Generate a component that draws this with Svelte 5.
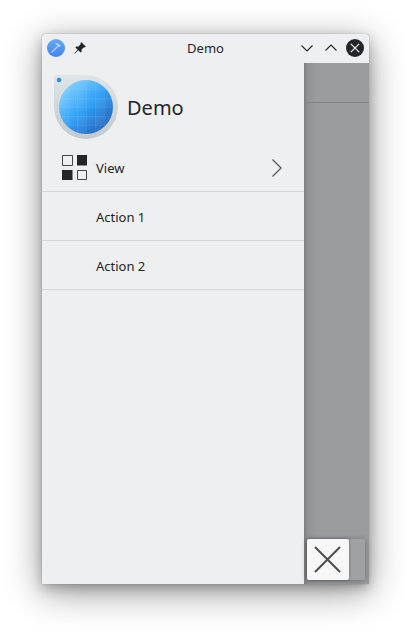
<script>
  const actions = ['Action 1', 'Action 2'];
</script>

<div class="desktop">
  <div class="window">
    <header class="titlebar">
      <div class="group">
        <button aria-label="Window menu">
          <svg width="18" height="18" viewBox="0 0 18 18">
            <defs>
              <linearGradient id="badge" x1="0" y1="0" x2="0" y2="1">
                <stop offset="0" stop-color="#64a7f8" />
                <stop offset="1" stop-color="#4386e9" />
              </linearGradient>
            </defs>
            <circle cx="9" cy="9" r="9" fill="url(#badge)" />
            <path d="M5 13 L11.2 6.8" stroke="#bcd7fb" stroke-width="1.2" stroke-linecap="round" />
            <path d="M7.6 4.8 Q10 3.6 11.6 4.9 L13.8 6.8 L12.9 8 L11.2 7.2 L10 6 Q9 5.2 7.6 4.8Z" fill="#bcd7fb" />
          </svg>
        </button>
        <button aria-label="Keep on all desktops">
          <svg width="18" height="18" viewBox="0 0 18 18">
            <path d="M10.4 3.2 L14.8 7.6 L13.7 8.6 L12.9 8.2 L10.6 10.5 L10.6 12.7 L9.6 13.6 L7.3 11.3 L4 14.4 L3.4 14.6 L3.6 14 L6.7 10.7 L4.4 8.4 L5.3 7.4 L7.5 7.4 L9.8 5.1 L9.4 4.3Z" fill="#232629" />
          </svg>
        </button>
      </div>
      <h1>Demo</h1>
      <div class="group right">
        <button aria-label="Minimize">
          <svg width="18" height="18" viewBox="0 0 18 18" fill="none" stroke="#232629" stroke-width="1.1">
            <path d="M3.5 6.5 L9 12 L14.5 6.5" />
          </svg>
        </button>
        <button aria-label="Maximize">
          <svg width="18" height="18" viewBox="0 0 18 18" fill="none" stroke="#232629" stroke-width="1.1">
            <path d="M3.5 11.5 L9 6 L14.5 11.5" />
          </svg>
        </button>
        <button aria-label="Close">
          <svg width="18" height="18" viewBox="0 0 18 18">
            <circle cx="9" cy="9" r="9" fill="#232629" />
            <path d="M4.8 4.8 L13.2 13.2 M13.2 4.8 L4.8 13.2" stroke="#eff0f1" stroke-width="1.2" />
          </svg>
        </button>
      </div>
    </header>

    <div class="body">
      <nav class="drawer">
        <div class="banner">
          <svg width="64" height="64" viewBox="0 0 64 64">
            <defs>
              <linearGradient id="plate" x1="0" y1="0" x2="0" y2="1">
                <stop offset="0" stop-color="#dfe5e7" />
                <stop offset="1" stop-color="#c2cacf" />
              </linearGradient>
              <linearGradient id="globe" x1="0.15" y1="0.12" x2="0.85" y2="0.88">
                <stop offset="0" stop-color="#7ccfff" />
                <stop offset="0.5" stop-color="#2fa0f7" />
                <stop offset="1" stop-color="#2568bf" />
              </linearGradient>
              <clipPath id="disc"><circle cx="32" cy="32" r="27" /></clipPath>
            </defs>
            <path d="M2 0 H32 A32 32 0 0 1 32 64 A32 32 0 0 1 0 32 V2 Q0 0 2 0Z" fill="url(#plate)" />
            <circle cx="5" cy="5" r="2.2" fill="#1d8fe8" />
            <circle cx="32" cy="32" r="27" fill="url(#globe)" />
            <g clip-path="url(#disc)" fill="#ffffff" fill-opacity="0.03">
              <path d="M5 5h9v54h-9z M23 5h9v54h-9z M41 5h9v54h-9z" />
              <path d="M5 5h54v9h-54z M5 23h54v9h-54z M5 41h54v9h-54z" />
            </g>
            <path clip-path="url(#disc)" d="M14.5 5v54 M23.5 5v54 M32.5 5v54 M41.5 5v54 M50.5 5v54 M5 14.5h54 M5 23.5h54 M5 32.5h54 M5 41.5h54 M5 50.5h54" stroke="#ffffff" stroke-opacity="0.07" />
          </svg>
          <h2>Demo</h2>
        </div>
        <ul>
          <li>
            <button class="row">
              <svg width="26" height="26" viewBox="0 0 26 26">
                <path d="M0.5 0.5h10v10h-10z M15.5 15.5h9v9h-9z" fill="none" stroke="#44474a" />
                <path d="M15 0h10v10.5h-10z M0 15h10.5v10h-10.5z" fill="#232629" />
              </svg>
              <span>View</span>
              <svg class="arrow" width="12" height="20" viewBox="0 0 12 20" fill="none" stroke="#5c5e61" stroke-width="1.4">
                <path d="M0.5 1.5 L9 10 L0.5 18.5" />
              </svg>
            </button>
          </li>
          {#each actions as action}
            <li>
              <button class="row"><i></i><span>{action}</span></button>
            </li>
          {/each}
        </ul>
      </nav>

      <main class="page">
        <div class="toolbar"></div>
        <div class="handles">
          <button class="handle" aria-label="Close drawer">
            <svg width="27" height="27" viewBox="0 0 27 27" stroke="#4d4d4d" stroke-width="2">
              <path d="M1 1 L26 26 M26 1 L1 26" />
            </svg>
          </button>
        </div>
      </main>
    </div>
  </div>
</div>

<style>
  :global(body) {
    margin: 0;
    background: #fff;
  }
  .desktop {
    box-sizing: border-box;
    display: flex;
    min-height: 100vh;
    padding: 34px 42px 50px;
    overflow: hidden;
    font-family: 'Noto Sans', sans-serif;
    font-size: 13px;
    line-height: 18px;
    color: #232629;
  }
  .window {
    flex: 1;
    display: flex;
    flex-direction: column;
    border-radius: 3px 3px 0 0;
    background: #eeeff1;
    box-shadow:
      0 0 1px rgba(0, 0, 0, 0.45),
      0 8px 36px rgba(0, 0, 0, 0.42),
      0 4px 12px rgba(0, 0, 0, 0.22);
  }
  button {
    margin: 0;
    padding: 0;
    border: 0;
    background: none;
    color: inherit;
    font: inherit;
  }
  svg {
    display: block;
  }
  h1,
  h2 {
    margin: 0;
    font-weight: 400;
  }
  h1 {
    font-size: 13px;
  }
  h2 {
    padding-top: 2px;
    font-size: 20px;
    line-height: 28px;
  }
  .titlebar {
    display: grid;
    grid-template-columns: 1fr auto 1fr;
    align-items: center;
    padding: 5px 5px 6px;
  }
  .group {
    display: flex;
    gap: 6px;
  }
  .right {
    justify-content: flex-end;
  }
  .body {
    flex: 1;
    display: flex;
  }
  .drawer {
    width: 80%;
  }
  .banner {
    display: flex;
    align-items: center;
    gap: 9px;
    padding: 12px 12px 4px;
  }
  ul {
    margin: 0;
    padding: 0;
    list-style: none;
  }
  .row {
    display: flex;
    align-items: center;
    gap: 8px;
    width: 100%;
    height: 49px;
    padding: 2px 20px 0;
    border-bottom: 1px solid #d5d7d9;
    text-align: left;
  }
  .row i {
    width: 26px;
  }
  .arrow {
    margin-left: auto;
  }
  .page {
    flex: 1;
    display: flex;
    flex-direction: column;
    justify-content: space-between;
    background: linear-gradient(90deg, #7e7f80, #929394 4px, #9b9c9d 14px);
  }
  .toolbar {
    height: 39px;
    border-bottom: 1px solid #828384;
  }
  .handles {
    margin: 0 4px 4px 3px;
    border-radius: 2px;
    background: #a0a1a2;
    box-shadow: 0 1px 6px rgba(0, 0, 0, 0.3);
  }
  .handle {
    display: grid;
    place-items: center;
    width: 42px;
    height: 41px;
    border-radius: 2px;
    background: #f7f7f7;
    box-shadow: 0 0 3px rgba(0, 0, 0, 0.4);
  }
</style>
